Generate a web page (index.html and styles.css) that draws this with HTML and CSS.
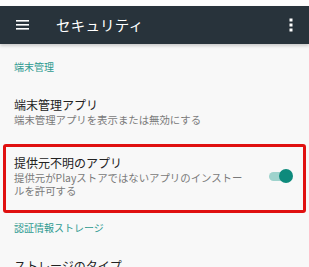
FILE: index.html
```html
<!DOCTYPE html>
<html lang="ja">
<head>
<meta charset="utf-8">
<link rel="stylesheet" href="styles.css">
</head>
<body>
<div class="status"></div>
<header class="appbar">
  <svg class="menu" width="13" height="10" viewBox="0 0 13 10"><rect x="0" y="0" width="13" height="1.6" fill="#fff"/><rect x="0" y="4" width="13" height="1.6" fill="#fff"/><rect x="0" y="8" width="13" height="1.6" fill="#fff"/></svg>
  <div class="title">セキュリティ</div>
  <svg class="more" width="4" height="14" viewBox="0 0 4 14"><rect x="0.5" y="0.5" width="3" height="3" fill="#fff"/><rect x="0.5" y="5.5" width="3" height="3" fill="#fff"/><rect x="0.5" y="10.5" width="3" height="3" fill="#fff"/></svg>
</header>
<main>
  <div class="section">端末管理</div>
  <div class="item first">
    <div class="item-title">端末管理アプリ</div>
    <div class="item-sub">端末管理アプリを表示または無効にする</div>
  </div>
  <div class="item highlight">
    <div class="item-text">
      <div class="item-title">提供元不明のアプリ</div>
      <div class="item-sub">提供元がPlayストアではないアプリのインストールを許可する</div>
    </div>
    <div class="switch"><span class="track"></span><span class="thumb"></span></div>
  </div>
  <div class="section second">認証情報ストレージ</div>
  <div class="item last">
    <div class="item-title">ストレージのタイプ</div>
  </div>
</main>
</body>
</html>
```
FILE: styles.css
```css
html, body {
  margin: 0;
  padding: 0;
  background: #f8f8f8;
  font-family: "Noto Sans CJK JP", "Noto Sans", sans-serif;
  overflow: hidden;
}
.status {
  height: 6px;
  background: #fdfdfd;
}
.appbar {
  height: 38px;
  background: #28333b;
  display: flex;
  align-items: center;
  padding: 0 16px;
  box-shadow: 0 2px 3px rgba(0, 0, 0, 0.18);
  position: relative;
}
.menu {
  display: block;
  flex: none;
}
.title {
  margin-left: 27px;
  color: #fff;
  font-size: 14.5px;
  letter-spacing: 0.2px;
  line-height: 20px;
  flex: 1;
}
.more {
  display: block;
}
.section {
  padding: 16px 14px 0;
  font-size: 10px;
  line-height: 14px;
  color: #2e9a90;
}
.section.second {
  padding-top: 8px;
}
.item-title {
  font-size: 12px;
  line-height: 16px;
  color: #222;
}
.item-sub {
  font-size: 10.4px;
  line-height: 13px;
  color: #7a7a7a;
}
.item.first {
  padding: 23px 14px 0;
  height: 44px;
}
.item.highlight {
  margin: 3px 3px 0;
  border: 3px solid #e01010;
  border-radius: 3px;
  display: flex;
  padding: 8px 10px 0 8px;
  height: 55px;
}
.item-text {
  flex: 1;
}
.switch {
  position: relative;
  width: 24px;
  height: 14px;
  margin-left: 24px;
  margin-top: 14px;
  flex: none;
}
.track {
  position: absolute;
  left: 0;
  top: 2.5px;
  width: 22px;
  height: 9px;
  border-radius: 5px;
  background: #9fd3cd;
}
.thumb {
  position: absolute;
  left: 10px;
  top: 0;
  width: 14px;
  height: 14px;
  border-radius: 50%;
  background: #0e8a7c;
}
.item.last {
  padding: 23px 14px 0;
}
```
